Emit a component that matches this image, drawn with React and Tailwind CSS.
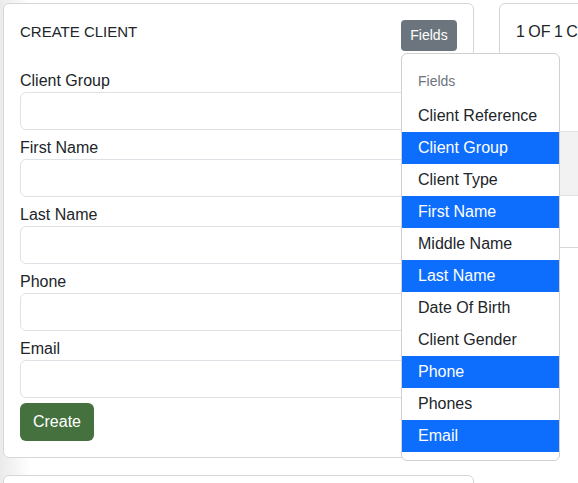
import React from "react";

const fields = ["Client Group", "First Name", "Last Name", "Phone", "Email"];
const options = [
  ["Client Reference", false],
  ["Client Group", true],
  ["Client Type", false],
  ["First Name", true],
  ["Middle Name", false],
  ["Last Name", true],
  ["Date Of Birth", false],
  ["Client Gender", false],
  ["Phone", true],
  ["Phones", false],
  ["Email", true],
];

export default function App() {
  return (
    <div className="h-[483px] w-[578px] overflow-hidden bg-[linear-gradient(to_right,#ebebeb,#ffffff_30px)] font-['Liberation_Sans',Arial,sans-serif] text-[#212529]">
      <div className="flex gap-[25px] pl-[3px] pt-[3px]">
        <div className="flex w-[471px] shrink-0 flex-col gap-[17px]">
          <div className="rounded-md border border-[#d6d6d6] bg-white p-4">
            <div className="flex items-start justify-between">
              <div className="text-[15px] leading-6">CREATE CLIENT</div>
              <div className="relative">
                <button className="h-[31px] w-[56px] rounded bg-[#6c757d] text-sm leading-[21px] text-white">
                  Fields
                </button>
                <div className="absolute left-0 top-full z-10 mt-[2px] w-[159px] rounded-md border border-[#d0d0d0] bg-white pb-2 pt-[9px]">
                  <div className="px-4 py-2 text-sm leading-[21px] text-[#6c757d]">Fields</div>
                  {options.map(([name, on]) => (
                    <div
                      key={name}
                      className={
                        on
                          ? "bg-[#0d6efd] px-4 py-1 text-base leading-6 text-white"
                          : "px-4 py-1 text-base leading-6 text-[#212529]"
                      }
                    >
                      {name}
                    </div>
                  ))}
                </div>
              </div>
            </div>
            <div className="mt-[17px] flex flex-col">
              {fields.map((f) => (
                <div key={f} className="flex flex-col">
                  <label className="pt-[1px] text-base leading-[23px]">{f}</label>
                  <div className="mb-[5px] h-[38px] rounded-md border border-[#dee2e6] bg-white" />
                </div>
              ))}
            </div>
            <button className="h-[38px] w-[74px] rounded-md bg-[#44713d] text-base text-white">
              Create
            </button>
          </div>
          <div className="h-[60px] rounded-md border border-[#d6d6d6] bg-white" />
        </div>
        <div className="h-[245px] w-[300px] shrink-0 rounded-md border border-[#d6d6d6] bg-white">
          <div className="whitespace-nowrap p-4 pb-0 text-base leading-6 [word-spacing:-1px]">1 OF 1 CLIENTS</div>
          <div className="mt-[87px] h-[65px] border-y border-[#e2e2e2] bg-[#f2f2f2]" />
        </div>
      </div>
    </div>
  );
}
